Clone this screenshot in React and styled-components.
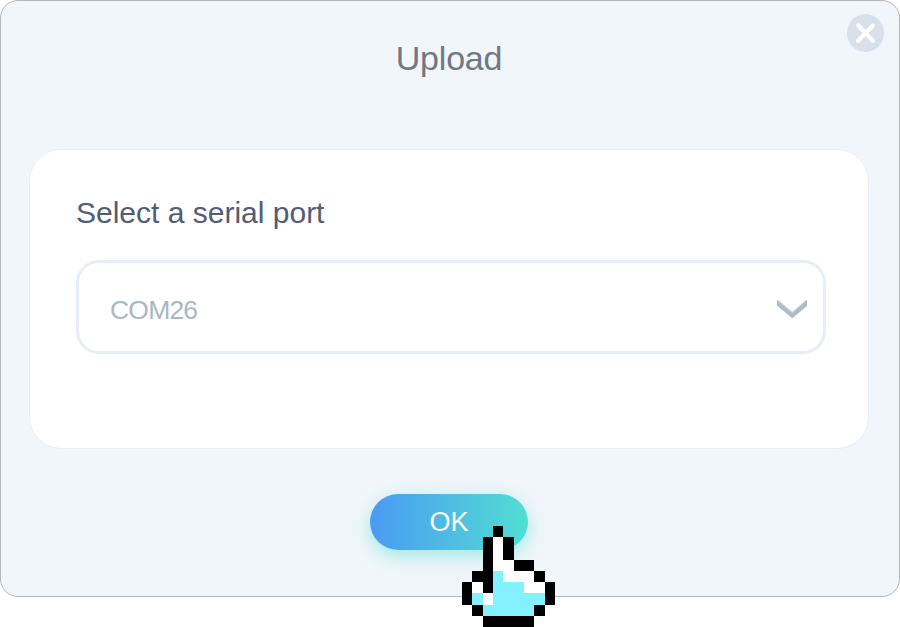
import React from "react";
import styled, { createGlobalStyle } from "styled-components";

const GlobalStyle = createGlobalStyle`
  * { box-sizing: border-box; }
  body {
    margin: 0;
    background: #fff;
    font-family: "Liberation Sans", Arial, sans-serif;
  }
`;

const Page = styled.main`
  width: 900px;
  height: 627px;
`;

const Dialog = styled.section`
  position: relative;
  display: flex;
  flex-direction: column;
  align-items: center;
  width: 900px;
  height: 597px;
  padding: 0 30px 0 28px;
  border: 1px solid #b4b6b9;
  border-radius: 18px;
  background: #f1f6fb;
`;

const Title = styled.h1`
  margin: 37px 0 0;
  height: 40px;
  font-size: 34px;
  letter-spacing: -0.2px;
  line-height: 40px;
  font-weight: 400;
  color: #717783;
`;

const CloseButton = styled.button`
  position: absolute;
  top: 13px;
  right: 15px;
  width: 37px;
  height: 38px;
  padding: 0;
  border: 0;
  background: none;
  svg { display: block; }
`;

const Panel = styled.div`
  width: 840px;
  height: 300px;
  margin-top: 71px;
  padding: 43px 42px 0 46px;
  border: 1px solid #e7eef5;
  border-radius: 32px;
  background: #fff;
`;

const Label = styled.label`
  display: block;
  height: 40px;
  font-size: 30px;
  line-height: 40px;
  color: #535b75;
`;

const Select = styled.div`
  display: flex;
  align-items: center;
  justify-content: space-between;
  width: 750px;
  height: 94px;
  margin-top: 27px;
  padding: 4px 16px 0 31px;
  border: 3px solid #e7eef7;
  border-radius: 23px;
  color: #a9b7c4;
`;

const SelectValue = styled.span`
  padding-top: 2px;
  font-size: 26.5px;
  letter-spacing: -0.8px;
`;

const OkButton = styled.button`
  width: 158px;
  height: 56px;
  margin-top: 45px;
  padding: 0;
  border: 0;
  border-radius: 28px;
  background: linear-gradient(90deg, #4a9bf2, #51ded3);
  box-shadow: 0 6px 18px rgba(81, 222, 211, 0.5);
  font: 27px "Liberation Sans", Arial, sans-serif;
  line-height: 56px;
  color: #fff;
`;

const Pointer = styled.svg`
  position: absolute;
  left: 461px;
  top: 525px;
  width: 93px;
  height: 101px;
  pointer-events: none;
`;

const pixels = [
  "...K.....",
  "..KWK....",
  "..KWK....",
  "..KWWKK..",
  ".KKCWWWK.",
  "KWKCCCWWK",
  "KCWCCCCCK",
  ".KCCCCCK.",
  "..KKKKK..",
];
const fills = { K: "#000", W: "#fff", C: "#84f1ff" };

function PixelHand() {
  return (
    <Pointer viewBox="0 0 9 9" preserveAspectRatio="none" shapeRendering="crispEdges" aria-hidden="true">
      {pixels.flatMap((row, y) =>
        [...row].map((p, x) =>
          fills[p] ? <rect key={`${x}-${y}`} x={x} y={y} width="1" height="1" fill={fills[p]} /> : null
        )
      )}
    </Pointer>
  );
}

export default function App() {
  return (
    <Page>
      <GlobalStyle />
      <Dialog role="dialog" aria-label="Upload">
        <Title>Upload</Title>
        <CloseButton aria-label="Close">
          <svg width="37" height="38" viewBox="0 0 37 38">
            <ellipse cx="18.5" cy="19" rx="18.5" ry="19" fill="#d7e0eb" />
            <path d="M11.1 11.5 25.9 26.8M25.9 11.5 11.1 26.8" stroke="#fff" strokeWidth="4.2" strokeLinecap="round" />
          </svg>
        </CloseButton>
        <Panel>
          <Label>Select a serial port</Label>
          <Select role="combobox" aria-expanded="false">
            <SelectValue>COM26</SelectValue>
            <svg width="30" height="19" viewBox="0 0 30 19" fill="none">
              <path d="M-2 0.8 15.3 15.2 32 0.8" stroke="#c3ced8" strokeWidth="5.2" />
              <path d="M-2 1.2 15.3 15.6 32 1.2" stroke="#acbbc8" strokeWidth="3.2" />
            </svg>
          </Select>
        </Panel>
        <OkButton>OK</OkButton>
        <PixelHand />
      </Dialog>
    </Page>
  );
}
